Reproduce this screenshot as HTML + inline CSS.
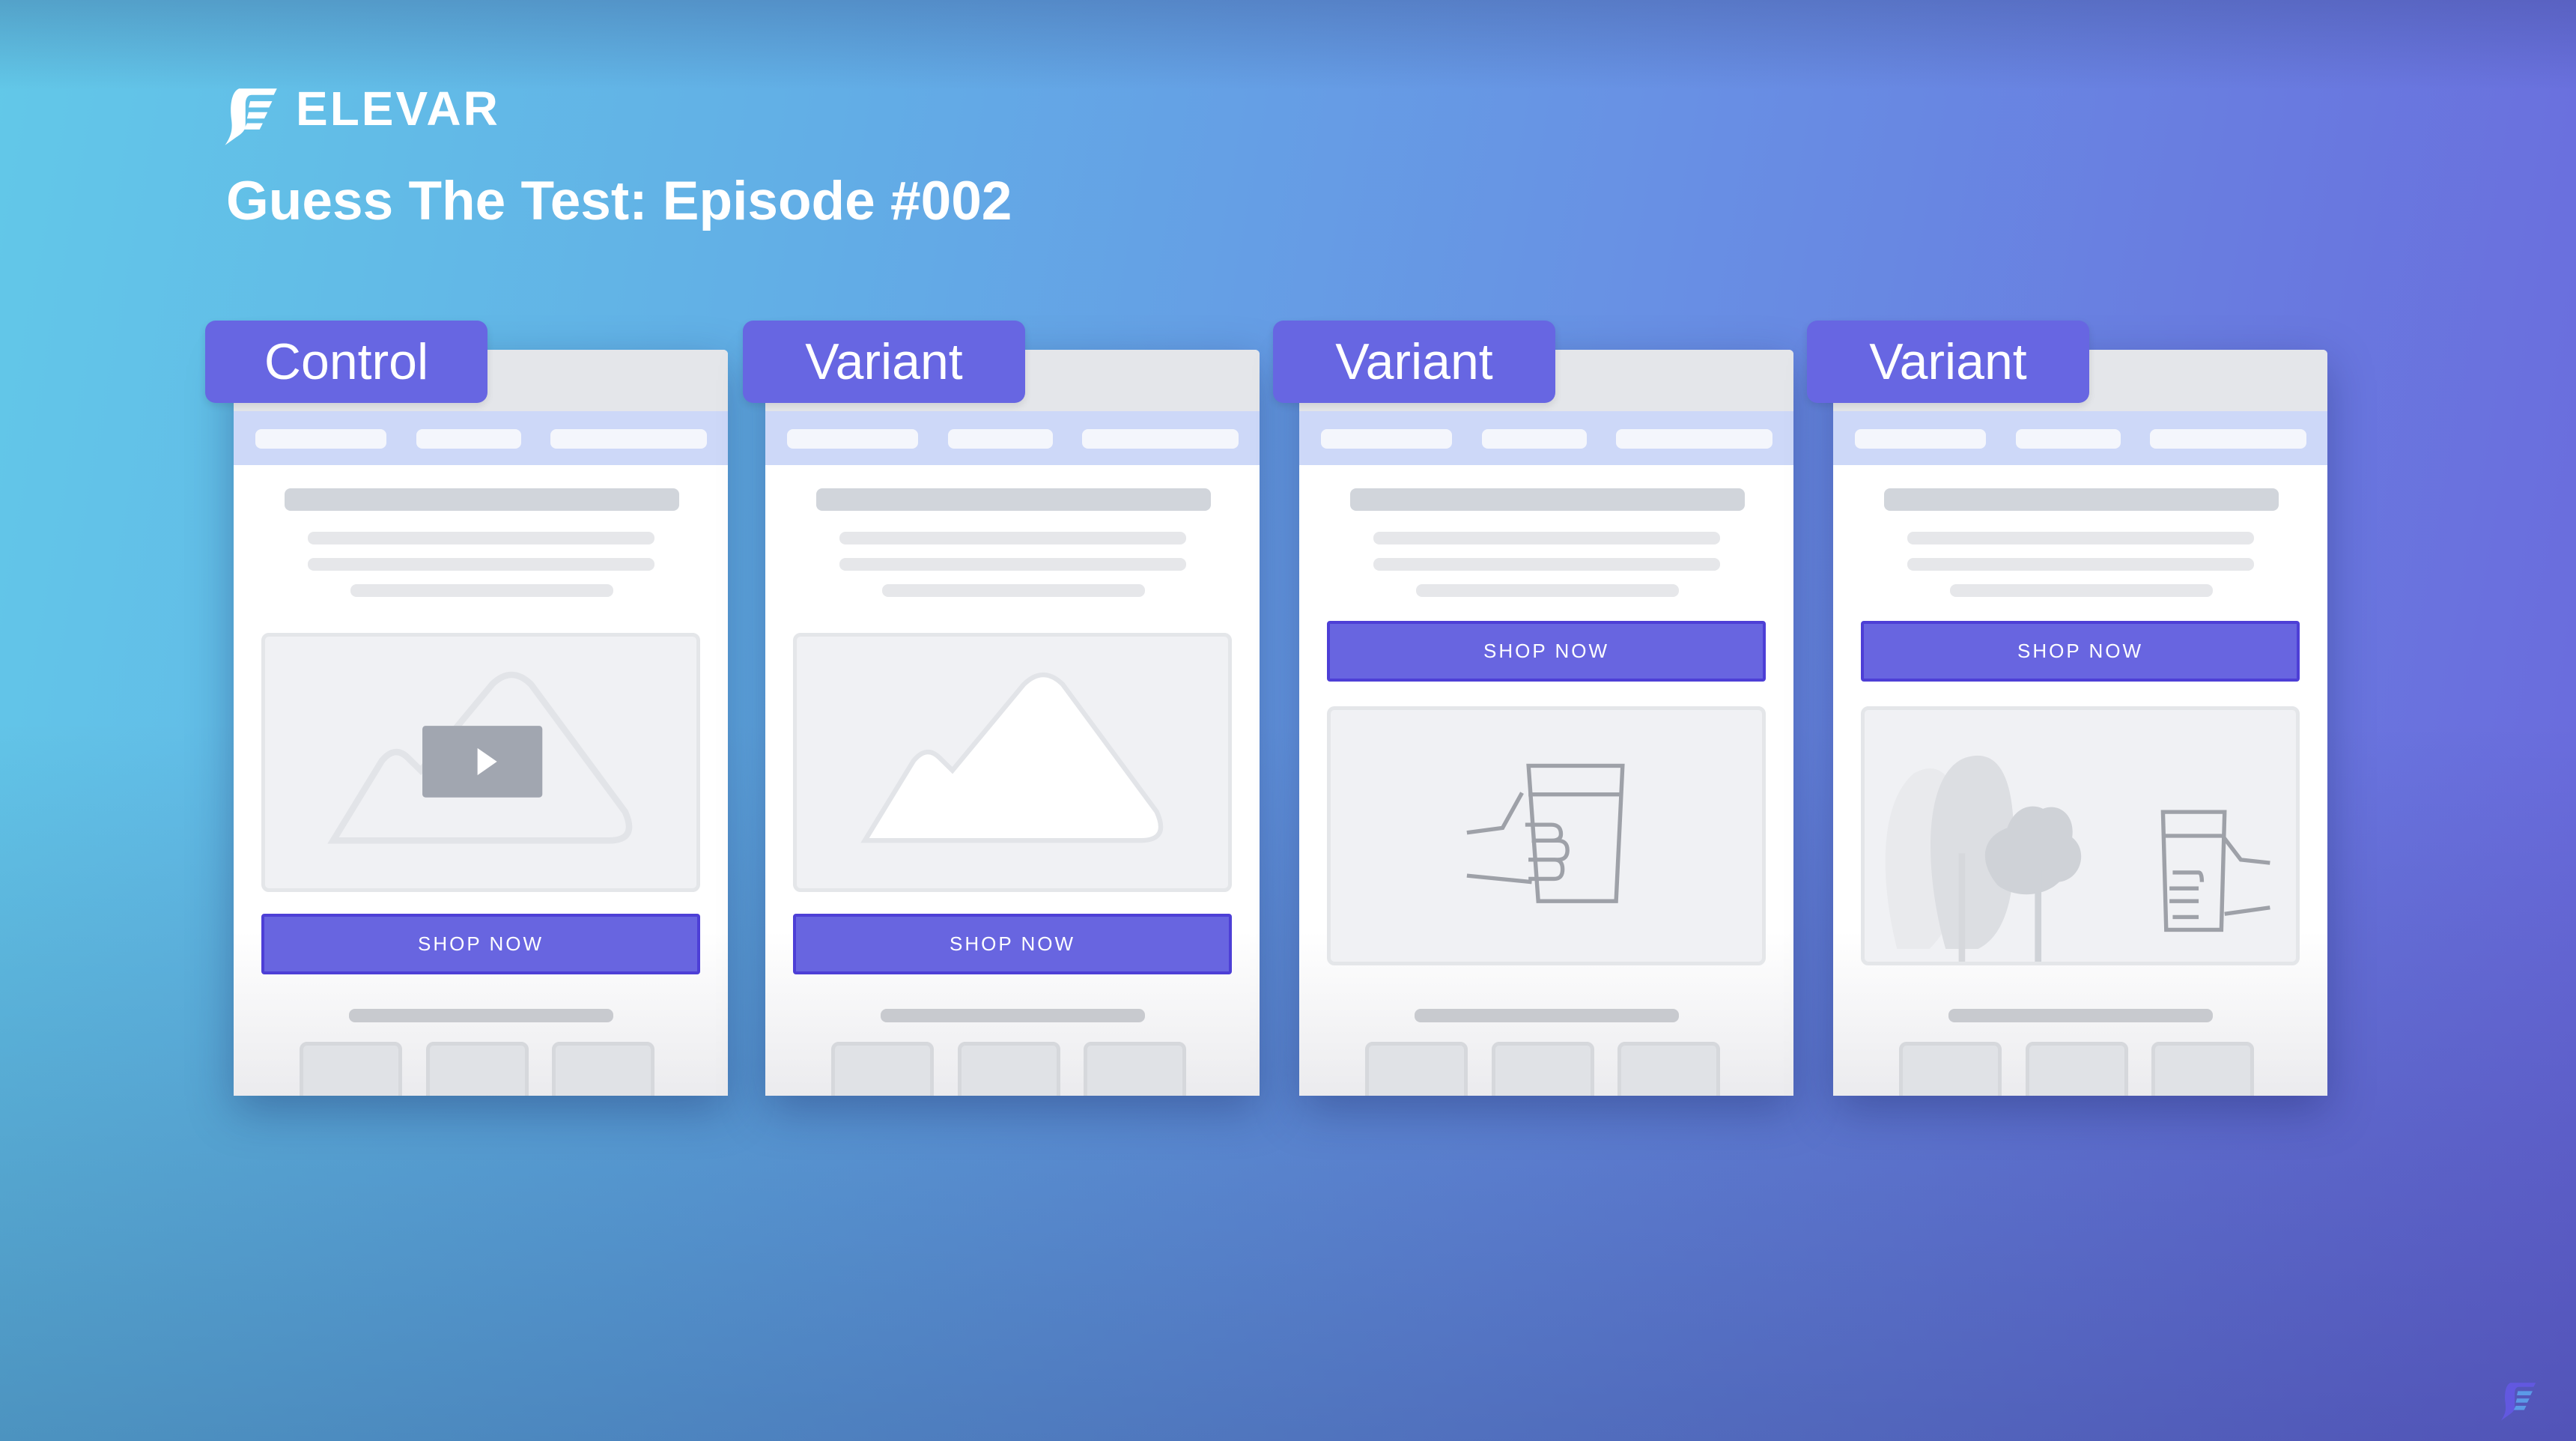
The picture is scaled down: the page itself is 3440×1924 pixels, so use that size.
<!DOCTYPE html>
<html><head><meta charset="utf-8"><style>
*{margin:0;padding:0;box-sizing:border-box}
body{width:3440px;height:1924px;overflow:hidden;position:relative;font-family:"Liberation Sans",sans-serif;
background:linear-gradient(100deg,#62c8e8 0%,#62aee6 30%,#6890e4 60%,#6a68dc 100%)}
.shade{position:absolute;inset:0;background:linear-gradient(180deg,rgba(0,0,0,0) 0%,rgba(0,0,0,0) 50%,rgba(20,30,90,.28) 100%)}
.topshade{position:absolute;left:0;right:0;top:0;height:120px;background:linear-gradient(180deg,rgba(40,50,110,.25),rgba(0,0,0,0))}
.card{position:absolute;top:467px;width:660px;height:996px;background:linear-gradient(180deg,#fff 0%,#fff 78%,#ebebee 100%);box-shadow:0 20px 60px rgba(20,30,90,.35);border-radius:6px 6px 0 0;overflow:hidden}
.card .top{position:absolute;left:0;top:0;width:100%;height:82px;background:#e4e6ea}
.card .nav{position:absolute;left:0;top:82px;width:100%;height:72px;background:#cdd8f8}
.pill{position:absolute;top:24px;height:26px;background:#f4f6fc;border-radius:8px}
.bar{position:absolute;border-radius:8px}
.box{position:absolute;left:37px;width:586px;height:346px;background:#f0f1f4;border:5px solid #e4e6e9;border-radius:10px;overflow:hidden}
.btn{position:absolute;left:37px;width:586px;height:81px;background:#6865e0;border:4px solid #4d3fd6;border-radius:4px;color:#fff;font-size:26px;letter-spacing:3px;text-align:center;line-height:73px}
.thumb{position:absolute;top:924px;width:137px;height:90px;background:#e0e2e6;border:5px solid #d6d8dc;border-radius:10px}
.tab{position:absolute;top:428px;width:377px;height:110px;background:#6766e2;border-radius:14px;color:#fff;font-size:68px;text-align:center;line-height:110px;box-shadow:0 4px 10px rgba(0,0,0,.1)}
</style></head><body>
<div class="shade"></div><div class="topshade"></div>

<svg style="position:absolute;left:290px;top:112px" width="84" height="84" viewBox="0 0 40 40">
<path fill="#fff" d="M14 3 H38 L36 7 H22 C19 7 18 10 18 13 V26 C18 30 15 32 12 34 L5 39 C9 33 10 29 9 22 C8 14 9 5 14 3 Z"/>
<path fill="#fff" d="M21 11 H35 L33 15 H20 Z M20 18 H32 L30 22 H19 Z M19 25 H29 L27 29 H17 Z"/>
</svg>
<div style="position:absolute;left:395px;top:110px;font-size:64px;font-weight:bold;color:#fff;letter-spacing:3px;line-height:70px">ELEVAR</div>
<div style="position:absolute;left:302px;top:224px;font-size:73px;font-weight:bold;color:#fff;line-height:90px">Guess The Test: Episode #002</div>

<div class="card" style="left:312px">
<div class="top"></div><div class="nav"><div class="pill" style="left:29px;width:175px"></div><div class="pill" style="left:244px;width:140px"></div><div class="pill" style="left:423px;width:209px"></div></div>
<div class="bar" style="left:68px;top:185px;width:527px;height:30px;background:#d1d5db"></div>
<div class="bar" style="left:99px;top:243px;width:463px;height:17px;background:#e6e7ea"></div>
<div class="bar" style="left:99px;top:278px;width:463px;height:17px;background:#e6e7ea"></div>
<div class="bar" style="left:156px;top:313px;width:351px;height:17px;background:#e6e7ea"></div>
<div class="box" style="top:378px"><svg width="576" height="336" viewBox="0 0 266 158" preserveAspectRatio="none"><path d="M42 128 L72 78 Q80 68 88 76 L96 84 L140 30 Q152 18 164 30 L222 110 Q230 128 212 128 Z" fill="none" stroke="#e2e4e8" stroke-width="4"/><rect x="97" y="56" width="74" height="45" rx="2" fill="#a1a6b0"/><path d="M131 70 L143 78.5 L131 87 Z" fill="#fff"/></svg></div>
<div class="btn" style="top:753px">SHOP NOW</div>
<div class="bar" style="left:154px;top:880px;width:353px;height:18px;background:#c8cacf"></div>
<div class="thumb" style="left:88px"></div><div class="thumb" style="left:257px"></div><div class="thumb" style="left:425px"></div>
</div>

<div class="card" style="left:1022px">
<div class="top"></div><div class="nav"><div class="pill" style="left:29px;width:175px"></div><div class="pill" style="left:244px;width:140px"></div><div class="pill" style="left:423px;width:209px"></div></div>
<div class="bar" style="left:68px;top:185px;width:527px;height:30px;background:#d1d5db"></div>
<div class="bar" style="left:99px;top:243px;width:463px;height:17px;background:#e6e7ea"></div>
<div class="bar" style="left:99px;top:278px;width:463px;height:17px;background:#e6e7ea"></div>
<div class="bar" style="left:156px;top:313px;width:351px;height:17px;background:#e6e7ea"></div>
<div class="box" style="top:378px"><svg width="576" height="336" viewBox="0 0 266 158" preserveAspectRatio="none"><path d="M42 128 L72 78 Q80 68 88 76 L96 84 L140 30 Q152 18 164 30 L222 110 Q230 128 212 128 Z" fill="#fff" stroke="#e2e4e8" stroke-width="3"/></svg></div>
<div class="btn" style="top:753px">SHOP NOW</div>
<div class="bar" style="left:154px;top:880px;width:353px;height:18px;background:#c8cacf"></div>
<div class="thumb" style="left:88px"></div><div class="thumb" style="left:257px"></div><div class="thumb" style="left:425px"></div>
</div>

<div class="card" style="left:1735px">
<div class="top"></div><div class="nav"><div class="pill" style="left:29px;width:175px"></div><div class="pill" style="left:244px;width:140px"></div><div class="pill" style="left:423px;width:209px"></div></div>
<div class="bar" style="left:68px;top:185px;width:527px;height:30px;background:#d1d5db"></div>
<div class="bar" style="left:99px;top:243px;width:463px;height:17px;background:#e6e7ea"></div>
<div class="bar" style="left:99px;top:278px;width:463px;height:17px;background:#e6e7ea"></div>
<div class="bar" style="left:156px;top:313px;width:351px;height:17px;background:#e6e7ea"></div>
<div class="btn" style="top:362px">SHOP NOW</div>
<div class="box" style="top:476px"><svg width="576" height="336" viewBox="0 0 266 158" preserveAspectRatio="none"><g fill="none" stroke="#9ea1a8" stroke-width="2.5"><path d="M122 35 H180 L176 120 H128 Z"/><path d="M122 53 H178"/><path d="M118 52 L106 74 L84 77"/><path d="M84 104 L124 108"/><path d="M120 72 H136 Q142 72 142 78 Q142 82 136 82 H124"/><path d="M124 82 H140 Q146 82 146 88 Q146 94 140 94 H122"/><path d="M122 94 H138 Q143 94 143 100 Q143 106 138 106 H122"/></g></svg></div>
<div class="bar" style="left:154px;top:880px;width:353px;height:18px;background:#c8cacf"></div>
<div class="thumb" style="left:88px"></div><div class="thumb" style="left:257px"></div><div class="thumb" style="left:425px"></div>
</div>

<div class="card" style="left:2448px">
<div class="top"></div><div class="nav"><div class="pill" style="left:29px;width:175px"></div><div class="pill" style="left:244px;width:140px"></div><div class="pill" style="left:423px;width:209px"></div></div>
<div class="bar" style="left:68px;top:185px;width:527px;height:30px;background:#d1d5db"></div>
<div class="bar" style="left:99px;top:243px;width:463px;height:17px;background:#e6e7ea"></div>
<div class="bar" style="left:99px;top:278px;width:463px;height:17px;background:#e6e7ea"></div>
<div class="bar" style="left:156px;top:313px;width:351px;height:17px;background:#e6e7ea"></div>
<div class="btn" style="top:362px">SHOP NOW</div>
<div class="box" style="top:476px"><svg width="576" height="336" viewBox="0 0 266 158" preserveAspectRatio="none">
<path d="M20 150 C10 110 8 60 30 40 C50 28 60 50 60 80 C62 120 50 140 40 150 Z" fill="#e9eaed"/>
<path d="M50 150 C36 100 36 40 62 30 C86 22 92 50 92 80 C94 130 80 145 70 150 Z" fill="#dcdee2"/>
<rect x="58" y="90" width="4" height="68" fill="#d6d8dc"/>
<path d="M82 110 C70 95 72 80 88 74 C92 62 102 58 110 62 C120 58 130 66 128 80 C138 88 134 106 120 108 C110 118 92 118 82 110 Z" fill="#cfd2d7"/>
<rect x="105" y="100" width="4" height="58" fill="#cfd2d7"/>
<g fill="none" stroke="#9ea1a8" stroke-width="2.5"><path d="M184 64 H222 L220 138 H186 Z"/><path d="M184 79 H220"/><path d="M220 78 L232 94 L250 96"/><path d="M250 124 L222 128"/><path d="M190 102 H206 Q208 102 208 108 M188 112 H206 M188 120 H206 M190 130 H206"/></g></svg></div>
<div class="bar" style="left:154px;top:880px;width:353px;height:18px;background:#c8cacf"></div>
<div class="thumb" style="left:88px"></div><div class="thumb" style="left:257px"></div><div class="thumb" style="left:425px"></div>
</div>

<div class="tab" style="left:274px">Control</div>
<div class="tab" style="left:992px">Variant</div>
<div class="tab" style="left:1700px">Variant</div>
<div class="tab" style="left:2413px">Variant</div>

<svg style="position:absolute;left:3333px;top:1842px" width="56" height="56" viewBox="0 0 40 40">
<path fill="#6258e0" d="M14 3 H38 L36 7 H22 C19 7 18 10 18 13 V26 C18 30 15 32 12 34 L5 39 C9 33 10 29 9 22 C8 14 9 5 14 3 Z"/>
<path fill="#5b9ae8" d="M21 11 H35 L33 15 H20 Z M20 18 H32 L30 22 H19 Z M19 25 H29 L27 29 H17 Z"/>
</svg>
</body></html>
